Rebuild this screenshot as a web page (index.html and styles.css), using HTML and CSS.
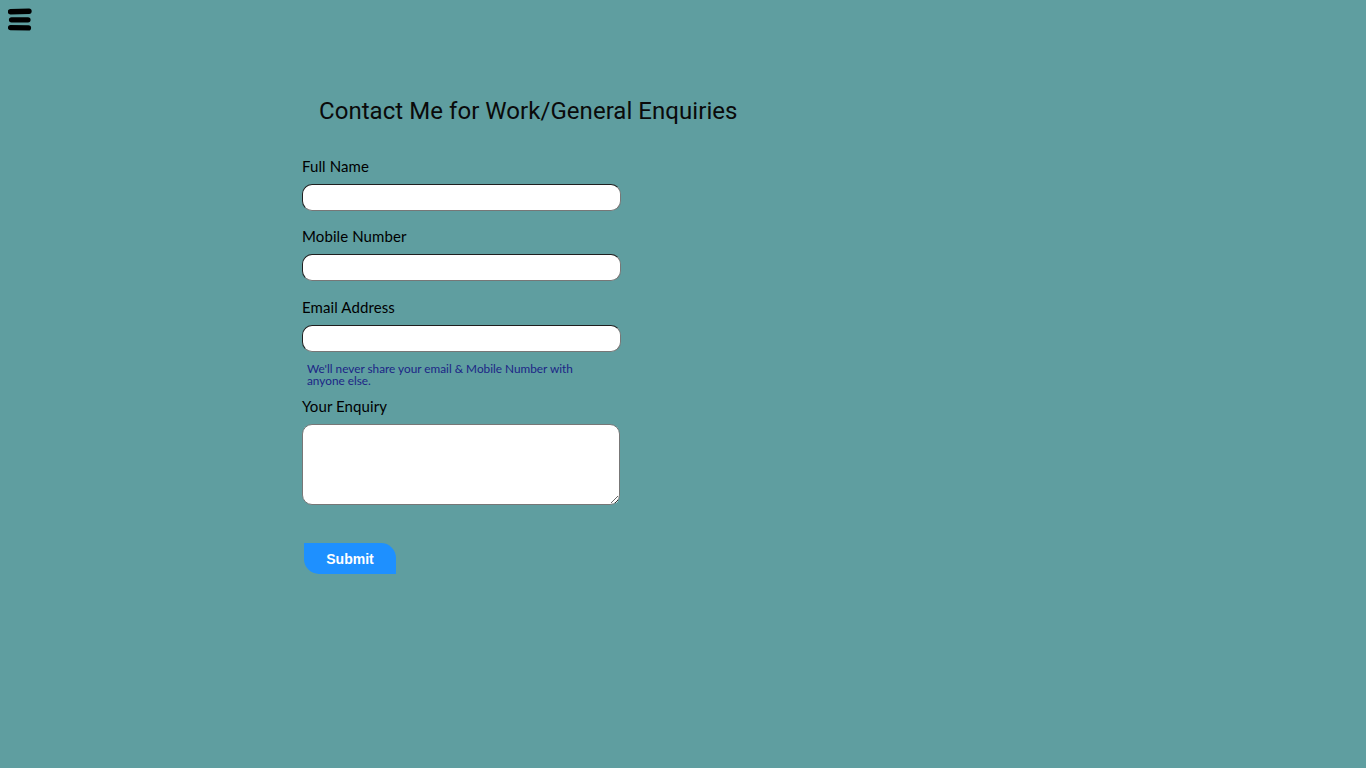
FILE: index.html
```html
<!DOCTYPE html>
<html lang="en">
<head>
<meta charset="utf-8">
<title>Contact</title>
<link rel="stylesheet" href="styles.css">
</head>
<body>
<header class="topbar">
  <button class="menu-btn" aria-label="Menu">
    <svg width="24" height="24" viewBox="0 0 24 24">
      <line x1="2.5" y1="3.8" x2="21" y2="3.3" stroke="#000" stroke-width="5.4" stroke-linecap="round"/>
      <line x1="3.5" y1="11.8" x2="20" y2="11.8" stroke="#000" stroke-width="5.2" stroke-linecap="round"/>
      <line x1="2.5" y1="19.6" x2="20.5" y2="19.9" stroke="#000" stroke-width="5.2" stroke-linecap="round"/>
    </svg>
  </button>
</header>
<main class="contact">
  <h1 class="contact-title">Contact Me for Work/General Enquiries</h1>
  <form class="contact-form">
    <div class="field">
      <label for="name">Full Name</label>
      <input id="name" type="text">
    </div>
    <div class="field">
      <label for="mobile">Mobile Number</label>
      <input id="mobile" type="tel">
    </div>
    <div class="field field-email">
      <label for="email">Email Address</label>
      <input id="email" type="email">
      <small class="hint">We'll never share your email &amp; Mobile Number with anyone else.</small>
    </div>
    <div class="field">
      <label for="enquiry">Your Enquiry</label>
      <textarea id="enquiry"></textarea>
    </div>
    <button type="submit" class="submit-btn">Submit</button>
  </form>
</main>
</body>
</html>
```

FILE: styles.css
```css
* { box-sizing: border-box; }
html, body { margin: 0; padding: 0; }
body {
  background: #5f9ea0;
  min-height: 768px;
  font-family: "Lato", "Open Sans", sans-serif;
  color: #000;
}
.topbar {
  height: 40px;
  padding: 8px 0 0 8px;
}
.menu-btn {
  background: none;
  border: 0;
  padding: 0;
  display: block;
  width: 24px;
  height: 24px;
  cursor: pointer;
}
.menu-btn svg { display: block; }

.contact {
  margin-left: 302px;
  padding-top: 56px;
}
.contact-title {
  margin: 0 0 31px 17px;
  font-family: "Roboto", sans-serif;
  font-weight: normal;
  font-size: 24px;
  line-height: 30px;
  letter-spacing: 0.05px;
  color: #0a0a0a;
}
.contact-form {
  width: 319px;
}
.field {
  display: flex;
  flex-direction: column;
  margin-bottom: 16px;
}
.field-email {
  padding-top: 1px;
}
.field label {
  font-size: 15px;
  line-height: 18px;
  margin-bottom: 9px;
  letter-spacing: 0.1px;
}
.field input {
  height: 27px;
  width: 319px;
  border: 1px solid;
  border-color: #1f1f1f #777 #777 #1f1f1f;
  border-radius: 10px;
  background: #fff;
  padding: 0 10px;
  font: inherit;
}
.field textarea {
  height: 81px;
  width: 318px;
  border: 1px solid;
  border-color: #777;
  border-radius: 10px;
  background: #fff;
  resize: vertical;
  font: inherit;
}
.hint {
  display: block;
  margin-top: 11px;
  margin-bottom: -6px;
  padding-left: 5px;
  width: 290px;
  font-size: 11.8px;
  line-height: 12px;
  color: #1c2586;
}
.submit-btn {
  margin: 22px 0 0 2px;
  width: 92px;
  height: 31px;
  border: 0;
  background: #1e90ff;
  color: #fff;
  font-family: "Liberation Sans", Arial, sans-serif;
  font-weight: bold;
  font-size: 14px;
  border-radius: 0 15px 0 15px;
  cursor: pointer;
}
```
